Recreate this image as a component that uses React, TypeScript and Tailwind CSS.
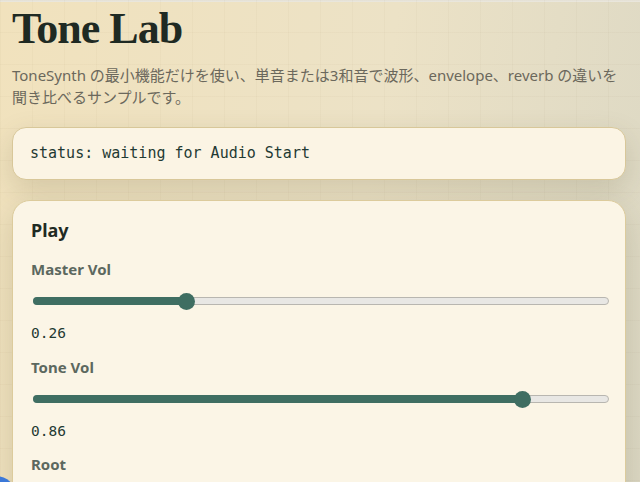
import React from "react";

type SliderProps = { label: string; value: number };

const mono = "font-['DejaVu_Sans_Mono','Liberation_Mono',monospace]";

function Slider({ label, value }: SliderProps) {
  // native range geometry: thumb centre runs from 8px to width-8px
  const pos = `calc(8px + ${value} * (100% - 16px))`;
  return (
    <div className="flex flex-col">
      <div className="text-[15px] font-bold leading-[20px] text-[#5c685f] mt-[14px]">{label}</div>
      <div className="relative h-[16px] ml-[2px] mt-[14px]">
        <div className="absolute left-0 right-0 top-[4px] h-[8px] rounded-full bg-[#e8e7e4] border border-[#b8b6b0]" />
        <div
          className="absolute left-0 top-[4px] h-[8px] rounded-full bg-[#3f6e62]"
          style={{ width: pos }}
        />
        <div
          className="absolute top-0 w-[17px] h-[17px] -ml-[8.5px] -mt-[0.5px] rounded-full bg-[#3f6e62]"
          style={{ left: pos }}
        />
      </div>
      <div className={`${mono} text-[14.5px] leading-[20px] text-[#1f3a33] mt-[14px]`}>
        {value.toFixed(2)}
      </div>
    </div>
  );
}

export default function App() {
  return (
    <div className="relative w-[640px] h-[482px] overflow-hidden bg-[linear-gradient(100deg,#f1e2bd_0%,#ece2c6_55%,#dcd8c4_100%)] font-['Noto_Sans','Noto_Sans_CJK_JP',sans-serif]">
      <div className="absolute inset-0 bg-[linear-gradient(rgba(120,100,60,0.035)_1px,transparent_1px),linear-gradient(90deg,rgba(120,100,60,0.035)_1px,transparent_1px)] bg-[size:32px_32px]" />
      <div className="h-[2px] bg-[#e9e6dc]" />
      <div className="relative pl-[12px] pr-[14px] pt-[3px]">
        <h1 className="font-['Liberation_Serif',serif] font-bold text-[44px] leading-[48px] tracking-[-1px] text-[#1f2a23]">
          Tone Lab
        </h1>
        <p className="mt-[11px] text-[15px] leading-[22px] text-[#6b685c]">
          ToneSynth の最小機能だけを使い、単音または3和音で波形、envelope、reverb の違いを
          <br />
          聞き比べるサンプルです。
        </p>

        <div className="mt-[19px] h-[53px] flex items-center px-[17px] rounded-[14px] bg-[#fbf4e4] border border-[#d8c799] shadow-[0_10px_28px_rgba(90,85,50,0.18)]">
          <span className={`${mono} text-[15px] text-[#1f3a33]`}>
            status: waiting for Audio Start
          </span>
        </div>

        <div className="mt-[20px] h-[320px] rounded-[18px] bg-[#fbf5e6] border border-[#dccb9c] shadow-[0_10px_30px_rgba(90,85,50,0.2)] pl-[18px] pr-[16px] pt-[17px]">
          <div className="text-[18px] font-bold leading-[24px] text-[#1f2a23]">Play</div>
          <div className="mt-[3px]">
            <Slider label="Master Vol" value={0.26} />
          </div>
          <Slider label="Tone Vol" value={0.86} />
          <div className="text-[15px] font-bold leading-[20px] text-[#5c685f] mt-[13px]">Root</div>
        </div>
      </div>
      <div className="absolute left-[-30px] top-[476px] w-[46px] h-[40px] rounded-full bg-[#3b78d8]" />
    </div>
  );
}
